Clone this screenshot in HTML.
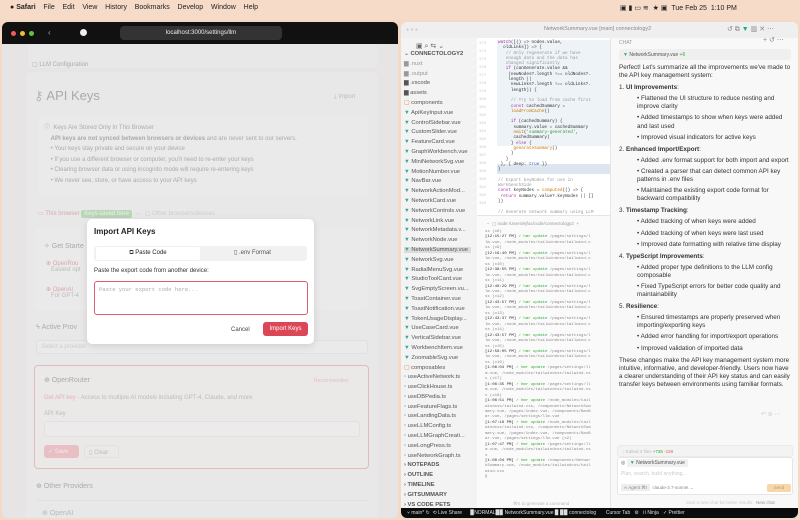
<!DOCTYPE html><html><head><style>
*{margin:0;padding:0;box-sizing:border-box}
body{width:800px;height:520px;overflow:hidden;background:#f3d9c6;font-family:"Liberation Sans",sans-serif;position:relative;font-size:6px;color:#333}
.a{position:absolute;white-space:nowrap}
.mono{font-family:"Liberation Mono",monospace}
</style></head><body>
<div class="a" style="left:0;top:0;width:800px;height:20px;background:#f6dcc8"></div>
<div class="a" style="left:10px;top:4px;font-size:7px;color:#222">● <b>Safari</b>&nbsp;&nbsp;&nbsp; File&nbsp;&nbsp;&nbsp; Edit&nbsp;&nbsp;&nbsp; View&nbsp;&nbsp;&nbsp; History&nbsp;&nbsp;&nbsp; Bookmarks&nbsp;&nbsp;&nbsp; Develop&nbsp;&nbsp;&nbsp; Window&nbsp;&nbsp;&nbsp; Help</div>
<div class="a" style="left:620px;top:4px;font-size:7px;color:#222">▣ ▮ ▭ ≋ &nbsp;★ ▣ &nbsp;Tue Feb 25&nbsp; 1:10 PM</div>
<!-- Safari window -->
<div class="a" style="left:2px;top:22px;width:396px;height:496px;background:#e6e4e4;border-radius:6px;overflow:hidden">
 <div class="a" style="left:0;top:0;width:396px;height:22px;background:#111"></div>
 <div class="a" style="left:9px;top:9px;width:5px;height:5px;border-radius:50%;background:#ec5f57"></div>
 <div class="a" style="left:18px;top:9px;width:5px;height:5px;border-radius:50%;background:#f0bd2f"></div>
 <div class="a" style="left:27px;top:9px;width:5px;height:5px;border-radius:50%;background:#5fc53f"></div>
 <div class="a" style="left:46px;top:6px;color:#aaa;font-size:8px">‹</div>
 <div class="a" style="left:78px;top:7px;width:7px;height:7px;border-radius:50%;background:#eee"></div>
 <div class="a" style="left:118px;top:4px;width:162px;height:14px;background:#333;border-radius:4px;color:#eee;font-size:6px;text-align:center;line-height:14px">localhost:3000/settings/llm</div>
 <div class="a" style="left:26px;top:22px;width:350px;height:24px;background:#e9e8e8;border-radius:4px"></div>
 <div class="a" style="left:30px;top:39px;color:#aaa">▢ LLM Configuration</div>
 <div class="a" style="left:24px;top:50px;width:352px;height:450px;background:#e9e8e8;border-radius:6px"></div>
 <div class="a" style="left:32px;top:66px;font-size:13px;color:#b9b5b5">⚷ <span style="color:#aaa">API Keys</span></div>
 <div class="a" style="left:332px;top:72px;color:#bbb">⤓ Import</div>
 <div class="a" style="left:36px;top:93px;width:330px;height:80px;background:#ebeaea;border-radius:4px"></div>
 <div class="a" style="left:42px;top:101px;color:#aaa;line-height:10.5px">ⓘ&nbsp; Keys Are Stored Only In This Browser<br>&nbsp;&nbsp;&nbsp;&nbsp;<b>API keys are not synced between browsers or devices</b> and are never sent to our servers.<br>&nbsp;&nbsp;&nbsp;&nbsp;• Your keys stay private and secure on your device<br>&nbsp;&nbsp;&nbsp;&nbsp;• If you use a different browser or computer, you'll need to re-enter your keys<br>&nbsp;&nbsp;&nbsp;&nbsp;• Clearing browser data or using incognito mode will require re-entering keys<br>&nbsp;&nbsp;&nbsp;&nbsp;• We never see, store, or have access to your API keys</div>
 <div class="a" style="left:36px;top:188px;color:#d8a8ad">▭ This browser <span style="background:#b9d6b6;color:#eee;padding:1px 3px;border-radius:2px">Keys saved here</span> <span style="color:#ccc">&nbsp;— &nbsp;▢ Other browsers/devices</span></div>
 <div class="a" style="left:34px;top:206px;width:332px;height:82px;background:#ebeaea;border-radius:4px"></div>
 <div class="a" style="left:42px;top:220px;font-size:7px;color:#aaa">✧ Get Starte</div>
 <div class="a" style="left:44px;top:238px;color:#d9a4aa;font-size:6px">⊕ OpenRou<br><span style="color:#bbb">&nbsp;&nbsp;&nbsp;Easiest opt</span></div>
 <div class="a" style="left:44px;top:264px;color:#d9a4aa">⊕ OpenAI<br><span style="color:#bbb">&nbsp;&nbsp;&nbsp;For GPT-4</span></div>
 <div class="a" style="left:34px;top:302px;font-size:7px;color:#aaa">ϟ Active Prov</div>
 <div class="a" style="left:34px;top:318px;width:332px;height:14px;background:#ebeaea;border:1px solid #e0dede;border-radius:3px;color:#ccc;padding:3px 4px">Select a provider</div>
 <div class="a" style="left:32px;top:343px;width:335px;height:104px;background:#ebe8e8;border:1px solid #e2b9bd;border-radius:4px"></div>
 <div class="a" style="left:42px;top:354px;font-size:7px;color:#aaa">⊕ OpenRouter</div>
 <div class="a" style="left:312px;top:356px;color:#e3c0c3;font-size:5px">Recommended</div>
 <div class="a" style="left:42px;top:373px;color:#bbb"><span style="color:#e3b2b7">Get API key</span> - Access to multiple AI models including GPT-4, Claude, and more</div>
 <div class="a" style="left:42px;top:389px;color:#bbb">API Key</div>
 <div class="a" style="left:42px;top:399px;width:316px;height:16px;background:#eceaea;border:1px solid #e2e0e0;border-radius:3px"></div>
 <div class="a" style="left:42px;top:423px;width:35px;height:13px;background:#e8bfc3;border-radius:3px;color:#f6eaea;padding:3px 4px">✓ Save</div>
 <div class="a" style="left:82px;top:423px;width:35px;height:13px;border:1px solid #e2e0e0;border-radius:3px;color:#bbb;padding:3px 4px">▯ Clear</div>
 <div class="a" style="left:34px;top:460px;font-size:7px;color:#aaa">⊕ Other Providers</div>
 <div class="a" style="left:34px;top:478px;width:332px;height:20px;border-top:1px solid #e2e0e0"></div>
 <div class="a" style="left:40px;top:487px;font-size:7px;color:#bbb">⊕ OpenAI</div>
</div>
<!-- modal -->
<div class="a" style="left:87px;top:219px;width:227px;height:125px;background:#fff;border-radius:5px;box-shadow:0 2px 8px rgba(0,0,0,.12)">
 <div class="a" style="left:7px;top:8px;font-size:8px;font-weight:bold;color:#222">Import API Keys</div>
 <div class="a" style="left:7px;top:27px;width:213px;height:15px;background:#f1f1f1;border-radius:3px"></div>
 <div class="a" style="left:9px;top:28px;width:104px;height:13px;background:#fff;border-radius:2px;text-align:center;line-height:13px;color:#222">⧉ Paste Code</div>
 <div class="a" style="left:113px;top:28px;width:105px;height:13px;text-align:center;line-height:13px;color:#555">▯ .env Format</div>
 <div class="a" style="left:7px;top:49px;color:#333">Paste the export code from another device:</div>
 <div class="a mono" style="left:7px;top:62px;width:214px;height:34px;border:1px solid #d9606e;border-radius:3px;color:#aaa;padding:4px 4px;font-size:5.5px">Paste your export code here...</div>
 <div class="a" style="left:144px;top:104px;color:#444;font-size:6px;line-height:14px">Cancel</div>
 <div class="a" style="left:176px;top:103px;width:45px;height:14px;background:#dc4757;border-radius:3px;color:#fff;text-align:center;line-height:14px;font-size:6px">Import Keys</div>
</div>
<!-- VSCode window -->
<div class="a" style="left:401px;top:22px;width:397px;height:496px;background:#f7f7f7;border-radius:6px;overflow:hidden">
 <div class="a" style="left:0;top:0;width:397px;height:16px;background:#f0efef"></div>
 <div class="a" style="left:5px;top:5px;color:#ccc;font-size:5px">●&nbsp;●&nbsp;●</div>
 <div class="a" style="left:143px;top:4px;color:#888;font-size:5.5px">NetworkSummary.vue [main] connectology2</div>
 <div class="a" style="left:326px;top:3px;color:#888;font-size:7px">↺ ⧉ <span style="color:#2a8">▼</span> ▥ ✕ ⋯</div>
 <div class="a" style="left:0;top:16px;width:76px;height:470px;background:#f3f3f3"></div>
 <div class="a" style="left:15px;top:20px;color:#666;font-size:7px">▣ ⌕ ⇆ ⌄</div>
 <div class="a" style="left:3px;top:28px;color:#555;font-size:5.8px;line-height:9.8px">⌄ <b>CONNECTOLOGY2</b><br>
 <span style="color:#999">▆ .nuxt<br>▆ .output</span><br>▆ .vscode<br>▆ assets<br><span style="color:#e08a50">▢</span> components<br>
 <span style="color:#3a9">▼</span> ApiKeyInput.vue<br><span style="color:#3a9">▼</span> ControlSidebar.vue<br><span style="color:#3a9">▼</span> CustomSlider.vue<br><span style="color:#3a9">▼</span> FeatureCard.vue<br><span style="color:#3a9">▼</span> GraphWorkbench.vue<br><span style="color:#3a9">▼</span> MiniNetworkSvg.vue<br><span style="color:#3a9">▼</span> MotionNumber.vue<br><span style="color:#3a9">▼</span> NavBar.vue<br><span style="color:#3a9">▼</span> NetworkActionMod...<br><span style="color:#3a9">▼</span> NetworkCard.vue<br><span style="color:#3a9">▼</span> NetworkControls.vue<br><span style="color:#3a9">▼</span> NetworkLink.vue<br><span style="color:#3a9">▼</span> NetworkMetadata.v...<br><span style="color:#3a9">▼</span> NetworkNode.vue<br><span style="background:#dcdcdc"><span style="color:#3a9">▼</span> NetworkSummary.vue&nbsp;&nbsp;</span><br><span style="color:#3a9">▼</span> NetworkSvg.vue<br><span style="color:#3a9">▼</span> RadialMenuSvg.vue<br><span style="color:#3a9">▼</span> StudioToolCard.vue<br><span style="color:#3a9">▼</span> SvgEmptyScreen.vu...<br><span style="color:#3a9">▼</span> ToastContainer.vue<br><span style="color:#3a9">▼</span> ToastNotification.vue<br><span style="color:#3a9">▼</span> TokenUsageDisplay...<br><span style="color:#3a9">▼</span> UseCaseCard.vue<br><span style="color:#3a9">▼</span> VerticalSidebar.vue<br><span style="color:#3a9">▼</span> WorkbenchItem.vue<br><span style="color:#3a9">▼</span> ZoomableSvg.vue<br><span style="color:#e08a50">▢</span> composables<br>
 <span style="color:#58c">▫</span> useActiveNetwork.ts<br><span style="color:#58c">▫</span> useClickHouse.ts<br><span style="color:#58c">▫</span> useDBPedia.ts<br><span style="color:#58c">▫</span> useFeatureFlags.ts<br><span style="color:#58c">▫</span> useLandingData.ts<br><span style="color:#58c">▫</span> useLLMConfig.ts<br><span style="color:#58c">▫</span> useLLMGraphCreati...<br><span style="color:#58c">▫</span> useLongPress.ts<br><span style="color:#58c">▫</span> useNetworkGraph.ts<br>
 <b>› NOTEPADS<br>› OUTLINE<br>› TIMELINE<br>› GITSUMMARY<br>› VS CODE PETS</b></div>
 <!-- editor -->
 <div class="a" style="left:76px;top:16px;width:133px;height:177px;background:#fff;overflow:hidden">
 <div class="a mono" style="left:2px;top:2px;color:#ccc;font-size:4px;line-height:8px">373<br>374<br>375<br>376<br>377<br>378<br>379<br>380<br>381<br>382<br>383<br>384<br>385<br>386<br>387<br>388<br>389<br>390<br>391<br>392<br>393</div>
 <div class="a" style="left:20px;top:2px;width:113px;height:106px;background:#eef3f8"></div>
 <div class="a" style="left:20px;top:126px;width:113px;height:10px;background:#dde6ee"></div>
 <div class="a mono" style="left:21px;top:2px;font-size:4.3px;line-height:5.3px;color:#333;white-space:pre"><span style="color:#a3a">watch(</span>[() =&gt; nodes.value,
  oldLinks]) =&gt; {
   <span style="color:#999">// Only regenerate if we have
   enough data and the data has
   changed significantly</span>
   <span style="color:#a3a">if</span> (canGenerate.value &amp;&amp;
    (newNodes?.length !== oldNodes?.
    length ||
     newLinks?.length !== oldLinks?.
     length)) {

     <span style="color:#999">// Try to load from cache first</span>
     <span style="color:#a3a">const</span> cachedSummary =
     <span style="color:#c70">loadFromCache</span>()

     <span style="color:#a3a">if</span> (cachedSummary) {
      summary.value = cachedSummary
      <span style="color:#c70">emit</span>(<span style="color:#393">'summary-generated'</span>,
      cachedSummary)
     } <span style="color:#a3a">else</span> {
      <span style="color:#c70">generateSummary</span>()
     }
   }
 }, { deep: <span style="color:#36c">true</span> })
}

<span style="color:#999">// Export keyNodes for use in
WorkbenchSide</span>
<span style="color:#a3a">const</span> keyNodes = <span style="color:#c70">computed</span>(() =&gt; {
 <span style="color:#a3a">return</span> summary.value?.keyNodes || []
})

<span style="color:#999">// Generate network summary using LLM</span>
<span style="color:#a3a">async function</span> <span style="color:#c70">generateSummary</span>() {
 <span style="color:#a3a">if</span> (isLoading.value || !canGenerate.
 value) <span style="color:#a3a">return</span>

 <span style="color:#a3a">const</span> { key, provider } = <span style="color:#c70">getApiKey</span>()
 <span style="color:#a3a">if</span> (!key) {
  error.value = <span style="color:#393">'API key required for
  summaries'</span>
  <span style="color:#999">// Add a router to navigate to
  settings</span>
  <span style="color:#a3a">const</span> router = <span style="color:#c70">useRouter</span>()</div>
 </div>
 <!-- terminal -->
 <div class="a" style="left:76px;top:193px;width:133px;height:293px;background:#fafafa;border-top:1px solid #e4e4e4"></div>
 <div class="a" style="left:86px;top:199px;color:#999;font-size:4.5px">– &nbsp;▢ node /Users/ejfox/code/connectology2 &nbsp;+</div>
 <div class="a mono" style="left:84px;top:208px;font-size:4px;line-height:5.45px;color:#888;white-space:pre">ss (x8)
<span style="color:#333">[12:15:27 PM]</span> <span style="color:#3a3">✓ hmr update</span> /pages/settings/l
lm.vue, /node_modules/tailwindcss/tailwind.c
ss (x9)
<span style="color:#333">[12:16:40 PM]</span> <span style="color:#3a3">✓ hmr update</span> /pages/settings/l
lm.vue, /node_modules/tailwindcss/tailwind.c
ss (x10)
<span style="color:#333">[12:38:55 PM]</span> <span style="color:#3a3">✓ hmr update</span> /pages/settings/l
lm.vue, /node_modules/tailwindcss/tailwind.c
ss (x11)
<span style="color:#333">[12:40:29 PM]</span> <span style="color:#3a3">✓ hmr update</span> /pages/settings/l
lm.vue, /node_modules/tailwindcss/tailwind.c
ss (x12)
<span style="color:#333">[12:43:57 PM]</span> <span style="color:#3a3">✓ hmr update</span> /pages/settings/l
lm.vue, /node_modules/tailwindcss/tailwind.c
ss (x13)
<span style="color:#333">[12:43:37 PM]</span> <span style="color:#3a3">✓ hmr update</span> /pages/settings/l
lm.vue, /node_modules/tailwindcss/tailwind.c
ss (x14)
<span style="color:#333">[12:43:57 PM]</span> <span style="color:#3a3">✓ hmr update</span> /pages/settings/l
lm.vue, /node_modules/tailwindcss/tailwind.c
ss (x15)
<span style="color:#333">[12:58:05 PM]</span> <span style="color:#3a3">✓ hmr update</span> /pages/settings/l
lm.vue, /node_modules/tailwindcss/tailwind.c
ss (x16)
<span style="color:#333">[1:06:04 PM]</span> <span style="color:#3a3">✓ hmr update</span> /pages/settings/ll
m.vue, /node_modules/tailwindcss/tailwind.cs
s (x17)
<span style="color:#333">[1:06:35 PM]</span> <span style="color:#3a3">✓ hmr update</span> /pages/settings/ll
m.vue, /node_modules/tailwindcss/tailwind.cs
s (x18)
<span style="color:#333">[1:06:51 PM]</span> <span style="color:#3a3">✓ hmr update</span> /node_modules/tail
windcss/tailwind.css, /components/NetworkSum
mary.vue, /pages/index.vue, /components/NavB
ar.vue, /pages/settings/llm.vue
<span style="color:#333">[1:07:16 PM]</span> <span style="color:#3a3">✓ hmr update</span> /node_modules/tail
windcss/tailwind.css, /components/NetworkSum
mary.vue, /pages/index.vue, /components/NavB
ar.vue, /pages/settings/llm.vue (x2)
<span style="color:#333">[1:07:47 PM]</span> <span style="color:#3a3">✓ hmr update</span> /pages/settings/ll
m.vue, /node_modules/tailwindcss/tailwind.cs
s
<span style="color:#333">[1:08:04 PM]</span> <span style="color:#3a3">✓ hmr update</span> /components/Networ
kSummary.vue, /node_modules/tailwindcss/tail
wind.css
<span style="color:#333">▯</span></div>
 <div class="a" style="left:112px;top:479px;color:#bbb;font-size:4.5px">⌘K to generate a command</div>
 <!-- chat -->
 <div class="a" style="left:209px;top:16px;width:188px;height:470px;background:#f8f8f8;border-left:1px solid #e6e6e6"></div>
 <div class="a" style="left:218px;top:18px;color:#999;font-size:5px">CHAT</div>
 <div class="a" style="left:362px;top:14px;color:#888;font-size:7px">+ ↺ ⋯</div>
 <div class="a" style="left:218px;top:27px;width:172px;height:11px;background:#efefef;border-radius:3px;color:#555;font-size:5px;padding:3px 4px"><span style="color:#3a9">▼</span> NetworkSummary.vue <span style="color:#3a3">+6</span></div>
 <div class="a" style="left:218px;top:42px;color:#333;font-size:6.3px;line-height:8.1px;white-space:normal;width:174px">Perfect! Let's summarize all the improvements we've made to the API key management system:
 <div style="margin-top:4px">1. <b>UI Improvements</b>:</div>
 <div style="padding-left:18px"><div style="margin-top:3px">• Flattened the UI structure to reduce nesting and improve clarity</div><div style="margin-top:3px">• Added timestamps to show when keys were added and last used</div><div style="margin-top:3px">• Improved visual indicators for active keys</div></div>
 <div style="margin-top:4px">2. <b>Enhanced Import/Export</b>:</div>
 <div style="padding-left:18px"><div style="margin-top:3px">• Added .env format support for both import and export</div><div style="margin-top:3px">• Created a parser that can detect common API key patterns in .env files</div><div style="margin-top:3px">• Maintained the existing export code format for backward compatibility</div></div>
 <div style="margin-top:4px">3. <b>Timestamp Tracking</b>:</div>
 <div style="padding-left:18px"><div style="margin-top:3px">• Added tracking of when keys were added</div><div style="margin-top:3px">• Added tracking of when keys were last used</div><div style="margin-top:3px">• Improved date formatting with relative time display</div></div>
 <div style="margin-top:4px">4. <b>TypeScript Improvements</b>:</div>
 <div style="padding-left:18px"><div style="margin-top:3px">• Added proper type definitions to the LLM config composable</div><div style="margin-top:3px">• Fixed TypeScript errors for better code quality and maintainability</div></div>
 <div style="margin-top:4px">5. <b>Resilience</b>:</div>
 <div style="padding-left:18px"><div style="margin-top:3px">• Ensured timestamps are properly preserved when importing/exporting keys</div><div style="margin-top:3px">• Added error handling for import/export operations</div><div style="margin-top:3px">• Improved validation of imported data</div></div>
 <div style="margin-top:4px">These changes make the API key management system more intuitive, informative, and developer-friendly. Users now have a clearer understanding of their API key status and can easily transfer keys between environments using familiar formats.</div>
 </div>
 <div class="a" style="left:360px;top:389px;color:#ccc;font-size:6px">↶ ⊘ ⋯</div>
 <div class="a" style="left:216px;top:423px;width:176px;height:12px;background:#f3f3f3;border:1px solid #eaeaea;border-radius:3px;color:#bbb;font-size:4.5px;padding:3px 5px">› Edited 3 files <span style="color:#3a3">+735</span> <span style="color:#d66">-159</span></div>
 <div class="a" style="left:216px;top:435px;width:176px;height:38px;background:#fff;border:1px solid #e6e6e6;border-radius:3px"></div>
 <div class="a" style="left:220px;top:438px;color:#555;font-size:5px">◎ <span style="background:#f0f0f0;padding:1px 3px"><span style="color:#3a9">▼</span> NetworkSummary.vue</span></div>
 <div class="a" style="left:220px;top:449px;color:#ccc;font-size:5px">Plan, search, build anything...</div>
 <div class="a" style="left:220px;top:463px;color:#888;font-size:4.5px"><span style="background:#eee;padding:1px 3px">∞ Agent ⌘I</span>&nbsp; claude-3.7-sonnet ⌄</div>
 <div class="a" style="left:366px;top:462px;width:24px;height:8px;background:#f6d7a8;border-radius:2px;color:#b98;font-size:4.5px;text-align:center;line-height:8px">Send</div>
 <div class="a" style="left:285px;top:478px;color:#ccc;font-size:4.5px">Start a new chat for better results. &nbsp;<span style="color:#999">New chat</span></div>
 <div class="a" style="left:0;top:486px;width:397px;height:10px;background:#0c0c0c;color:#ddd;font-size:5px;padding:2px 6px">⑂ main* ↻ &nbsp;⟲ Live Share &nbsp;&nbsp;&nbsp;&nbsp; ▉NORMAL▉▉ NetworkSummary.vue ▉ ▉▉ connectolog &nbsp;&nbsp;&nbsp;&nbsp;&nbsp; Cursor Tab &nbsp; ⚙ &nbsp; ⅠⅠ Ninja &nbsp; ✓ Prettier</div>
</div>
</body></html>
